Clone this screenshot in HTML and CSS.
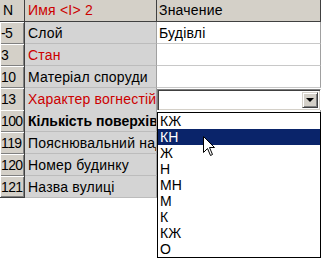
FILE: index.html
```html
<!DOCTYPE html>
<html lang="uk">
<head>
    <meta charset="UTF-8">
    <meta name="viewport" content="width=device-width, initial-scale=1.0">
    <title>Властивості</title>
    <link rel="stylesheet" href="styles.css">
</head>
<body>
    <div class="inspector">
        <!-- Заголовок таблиці -->
        <div class="row head">
            <div class="num">N</div>
            <div class="name red">Имя &lt;I&gt; 2</div>
            <div class="val">Значение</div>
        </div>
        <div class="row">
            <div class="num">-5</div>
            <div class="name">Слой</div>
            <div class="val">Будівлі</div>
        </div>
        <div class="row">
            <div class="num">3</div>
            <div class="name red">Стан</div>
            <div class="val"></div>
        </div>
        <div class="row">
            <div class="num">10</div>
            <div class="name">Матеріал споруди</div>
            <div class="val"></div>
        </div>
        <div class="row">
            <div class="num">13</div>
            <div class="name red">Характер вогнестійкості</div>
            <div class="val edit">
                <!-- Комбобокс -->
                <div class="combo">
                    <div class="combo-text"></div>
                    <div class="combo-btn"><span class="arrow"></span></div>
                </div>
            </div>
        </div>
        <div class="row">
            <div class="num">100</div>
            <div class="name bold">Кількість поверхів</div>
            <div class="val"></div>
        </div>
        <div class="row">
            <div class="num">119</div>
            <div class="name">Пояснювальний надпис</div>
            <div class="val"></div>
        </div>
        <div class="row">
            <div class="num">120</div>
            <div class="name">Номер будинку</div>
            <div class="val"></div>
        </div>
        <div class="row">
            <div class="num">121</div>
            <div class="name">Назва вулиці</div>
            <div class="val"></div>
        </div>

        <!-- Випадаючий список -->
        <ul class="dropdown">
            <li>КЖ</li>
            <li class="selected">КН</li>
            <li>Ж</li>
            <li>Н</li>
            <li>МН</li>
            <li>М</li>
            <li>К</li>
            <li>КЖ</li>
            <li>О</li>
        </ul>

        <!-- Курсор миші -->
        <svg class="cursor" width="13" height="21" viewBox="0 0 13 21">
            <path d="M0.5 0.5 L0.5 16.5 L4.5 12.5 L7.5 19.5 L9.5 18.5 L6.5 11.5 L11.5 11.5 Z" fill="#fff" stroke="#000" stroke-width="1"/>
        </svg>
    </div>
</body>
</html>
```

FILE: styles.css
```css
body {
    margin: 0;
    background: #fff;
    font-family: "Liberation Sans", Arial, sans-serif;
    font-size: 14px;
    color: #000;
}
.inspector {
    position: relative;
    width: 322px;
    height: 271px;
}
.row {
    display: grid;
    grid-template-columns: 25px 132px 164px;
    height: 22px;
}
.row > div {
    box-sizing: border-box;
    line-height: 22px;
    white-space: nowrap;
    overflow: hidden;
}
.num {
    background: #d4d0c8;
    border-right: 1px solid #404040;
    box-shadow: inset 1px 1px #fff, inset -1px -1px #808080;
    padding-left: 1px;
    letter-spacing: -0.6px;
}
.name {
    background: #d4d4d4;
    border-right: 1px solid #a0a0a0;
    border-bottom: 1px solid #bcbcbc;
    padding-left: 3px;
    letter-spacing: 0.2px;
}
.val {
    background: #fff;
    border-right: 1px solid #a0a0a0;
    border-bottom: 1px solid #c8c8c8;
    padding-left: 2px;
    letter-spacing: 0.2px;
}
.head > div {
    background: #d4d0c8;
    border-right: 1px solid #404040;
    border-bottom: 1px solid #404040;
    box-shadow: none;
    line-height: 21px;
}
.head .num {
    padding-left: 3px;
}
.red {
    color: #cc0000;
}
.bold {
    font-weight: bold;
    letter-spacing: 0;
}
.row:last-of-type .num {
    border-bottom: 1px solid #404040;
}

/* Комбобокс у рядку 13 */
.val.edit {
    padding: 0;
    border: none;
    overflow: visible;
}
.combo {
    box-sizing: border-box;
    display: flex;
    width: 164px;
    height: 22px;
    margin-top: 1px;
    background: #fff;
    border: 1px solid;
    border-color: #808080 #fff #fff #808080;
    box-shadow: inset 1px 1px #404040, inset -1px -1px #d4d0c8;
    padding: 2px;
}
.combo-text {
    flex: 1;
}
.combo-btn {
    box-sizing: border-box;
    width: 16px;
    height: 16px;
    background: #d4d0c8;
    border: 1px solid;
    border-color: #d4d0c8 #404040 #404040 #d4d0c8;
    box-shadow: inset 1px 1px #fff, inset -1px -1px #808080;
    display: flex;
    align-items: center;
    justify-content: center;
}
.arrow {
    width: 0;
    height: 0;
    border-left: 4px solid transparent;
    border-right: 4px solid transparent;
    border-top: 4px solid #000;
}

/* Список значень */
.dropdown {
    position: absolute;
    left: 157px;
    top: 112px;
    width: 164px;
    box-sizing: border-box;
    margin: 0;
    padding: 0;
    list-style: none;
    background: #fff;
    border: 1px solid #000;
}
.dropdown li {
    height: 16px;
    line-height: 16px;
    padding-left: 2px;
}
.dropdown li.selected {
    background: #0a246a;
    color: #fff;
}
.cursor {
    position: absolute;
    left: 203px;
    top: 136px;
}
```
